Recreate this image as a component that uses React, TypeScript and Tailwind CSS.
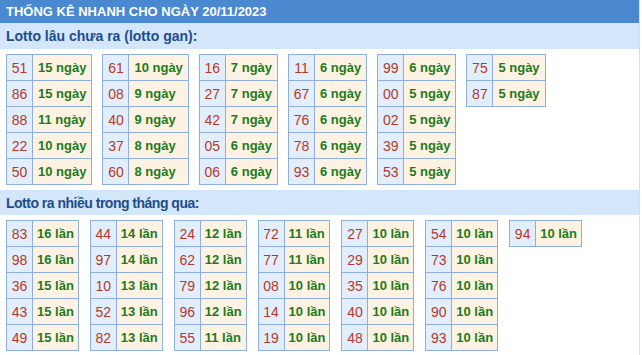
const ganTables: [string, string][][] = [
  [["51", "15 ngày"], ["86", "15 ngày"], ["88", "11 ngày"], ["22", "10 ngày"], ["50", "10 ngày"]],
  [["61", "10 ngày"], ["08", "9 ngày"], ["40", "9 ngày"], ["37", "8 ngày"], ["60", "8 ngày"]],
  [["16", "7 ngày"], ["27", "7 ngày"], ["42", "7 ngày"], ["05", "6 ngày"], ["06", "6 ngày"]],
  [["11", "6 ngày"], ["67", "6 ngày"], ["76", "6 ngày"], ["78", "6 ngày"], ["93", "6 ngày"]],
  [["99", "6 ngày"], ["00", "5 ngày"], ["02", "5 ngày"], ["39", "5 ngày"], ["53", "5 ngày"]],
  [["75", "5 ngày"], ["87", "5 ngày"]],
];

const hotTables: [string, string][][] = [
  [["83", "16 lần"], ["98", "16 lần"], ["36", "15 lần"], ["43", "15 lần"], ["49", "15 lần"]],
  [["44", "14 lần"], ["97", "14 lần"], ["10", "13 lần"], ["52", "13 lần"], ["82", "13 lần"]],
  [["24", "12 lần"], ["62", "12 lần"], ["79", "12 lần"], ["96", "12 lần"], ["55", "11 lần"]],
  [["72", "11 lần"], ["77", "11 lần"], ["08", "10 lần"], ["14", "10 lần"], ["19", "10 lần"]],
  [["27", "10 lần"], ["29", "10 lần"], ["35", "10 lần"], ["40", "10 lần"], ["48", "10 lần"]],
  [["54", "10 lần"], ["73", "10 lần"], ["76", "10 lần"], ["90", "10 lần"], ["93", "10 lần"]],
  [["94", "10 lần"]],
];

function LottoTable({ rows, tight }: { rows: [string, string][]; tight?: boolean }) {
  return (
    <table className="border-collapse self-start">
      <tbody>
        {rows.map(([num, val]) => (
          <tr key={num} className="h-[26px]">
            <td className="w-[26px] border border-[#8eaee0] bg-[#e2eefc] p-0 text-center text-[14px] text-[#b23a2a]">{num}</td>
            <td className={`border border-[#8eaee0] bg-[#fef3e2] text-[13px] font-bold text-[#1d7a1d] ${tight ? "px-[4px]" : "px-[5px]"}`}>
              {val}
            </td>
          </tr>
        ))}
      </tbody>
    </table>
  );
}

export default function App() {
  return (
    <div className="w-[640px] h-[355px] overflow-hidden border-r border-[#d8dde4] bg-white leading-none" style={{ fontFamily: '"Liberation Sans", Arial, sans-serif' }}>
      <div className="h-[23px] bg-[#4a88cf] pl-[6px] flex items-center text-[13px] font-bold text-white">
        THỐNG KÊ NHANH CHO NGÀY 20/11/2023
      </div>
      <div className="h-[26px] bg-[#d3e6fa] pl-[6px] flex items-center text-[14px] font-bold text-[#1e4d8c]">
        Lotto lâu chưa ra (lotto gan):
      </div>
      <div className="flex gap-[10px] px-[6px] pt-[5px] h-[141px]">
        {ganTables.map((rows, i) => (
          <LottoTable key={i} rows={rows} />
        ))}
      </div>
      <div className="h-[25px] bg-[#d3e6fa] pl-[6px] flex items-center text-[14px] font-bold tracking-[-0.5px] text-[#1e4d8c]">
        Lotto ra nhiều trong tháng qua:
      </div>
      <div className="flex gap-[11px] px-[6px] pt-[5px]">
        {hotTables.map((rows, i) => (
          <LottoTable key={i} rows={rows} tight />
        ))}
      </div>
    </div>
  );
}
